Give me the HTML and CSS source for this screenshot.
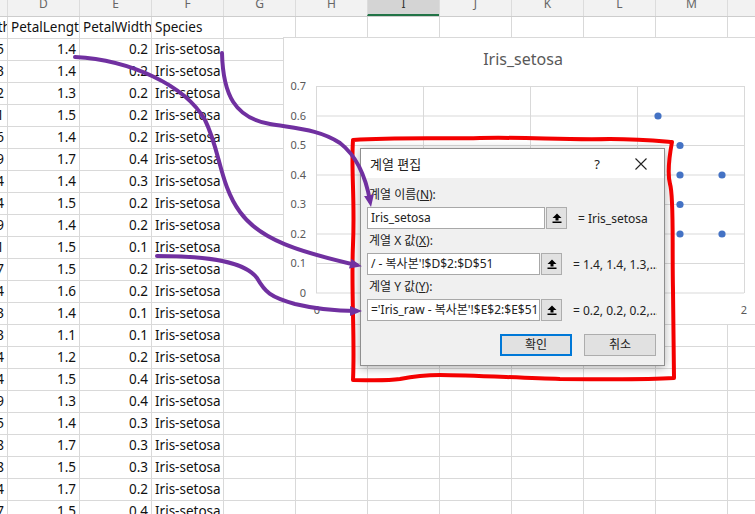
FILE: index.html
```html
<!DOCTYPE html>
<html lang="ko">
<head>
<meta charset="utf-8">
<title>계열 편집</title>
<link rel="stylesheet" href="styles.css">
</head>
<body>
<div class="sheet">
  <div class="colheads">
    <div class="ch">C</div><div class="ch">D</div><div class="ch">E</div><div class="ch">F</div>
    <div class="ch">G</div><div class="ch">H</div><div class="ch sel">I</div><div class="ch">J</div>
    <div class="ch">K</div><div class="ch">L</div><div class="ch">M</div><div class="ch">N</div>
  </div>
  <div class="grid">
    <div class="row"><div class="c">SepalWidth</div><div class="c">PetalLength</div><div class="c">PetalWidth</div><div class="c">Species</div></div>
    <div class="row"><div class="c num">3.5</div><div class="c num">1.4</div><div class="c num">0.2</div><div class="c">Iris-setosa</div></div>
    <div class="row"><div class="c num">3</div><div class="c num">1.4</div><div class="c num">0.2</div><div class="c">Iris-setosa</div></div>
    <div class="row"><div class="c num">3.2</div><div class="c num">1.3</div><div class="c num">0.2</div><div class="c">Iris-setosa</div></div>
    <div class="row"><div class="c num">3.1</div><div class="c num">1.5</div><div class="c num">0.2</div><div class="c">Iris-setosa</div></div>
    <div class="row"><div class="c num">3.6</div><div class="c num">1.4</div><div class="c num">0.2</div><div class="c">Iris-setosa</div></div>
    <div class="row"><div class="c num">3.9</div><div class="c num">1.7</div><div class="c num">0.4</div><div class="c">Iris-setosa</div></div>
    <div class="row"><div class="c num">3.4</div><div class="c num">1.4</div><div class="c num">0.3</div><div class="c">Iris-setosa</div></div>
    <div class="row"><div class="c num">3.4</div><div class="c num">1.5</div><div class="c num">0.2</div><div class="c">Iris-setosa</div></div>
    <div class="row"><div class="c num">2.9</div><div class="c num">1.4</div><div class="c num">0.2</div><div class="c">Iris-setosa</div></div>
    <div class="row"><div class="c num">3.1</div><div class="c num">1.5</div><div class="c num">0.1</div><div class="c">Iris-setosa</div></div>
    <div class="row"><div class="c num">3.7</div><div class="c num">1.5</div><div class="c num">0.2</div><div class="c">Iris-setosa</div></div>
    <div class="row"><div class="c num">3.4</div><div class="c num">1.6</div><div class="c num">0.2</div><div class="c">Iris-setosa</div></div>
    <div class="row"><div class="c num">3</div><div class="c num">1.4</div><div class="c num">0.1</div><div class="c">Iris-setosa</div></div>
    <div class="row"><div class="c num">3</div><div class="c num">1.1</div><div class="c num">0.1</div><div class="c">Iris-setosa</div></div>
    <div class="row"><div class="c num">4</div><div class="c num">1.2</div><div class="c num">0.2</div><div class="c">Iris-setosa</div></div>
    <div class="row"><div class="c num">4.4</div><div class="c num">1.5</div><div class="c num">0.4</div><div class="c">Iris-setosa</div></div>
    <div class="row"><div class="c num">3.9</div><div class="c num">1.3</div><div class="c num">0.4</div><div class="c">Iris-setosa</div></div>
    <div class="row"><div class="c num">3.5</div><div class="c num">1.4</div><div class="c num">0.3</div><div class="c">Iris-setosa</div></div>
    <div class="row"><div class="c num">3.8</div><div class="c num">1.7</div><div class="c num">0.3</div><div class="c">Iris-setosa</div></div>
    <div class="row"><div class="c num">3.8</div><div class="c num">1.5</div><div class="c num">0.3</div><div class="c">Iris-setosa</div></div>
    <div class="row"><div class="c num">3.4</div><div class="c num">1.7</div><div class="c num">0.2</div><div class="c">Iris-setosa</div></div>
    <div class="row"><div class="c num">3.7</div><div class="c num">1.5</div><div class="c num">0.4</div><div class="c">Iris-setosa</div></div>
  </div>
</div>

<div class="chart">
  <div class="chart-title">Iris_setosa</div>
  <svg class="plot" width="478" height="243" viewBox="284 81 478 243">
    <g stroke="#d9d9d9" stroke-width="1">
      <line x1="316" y1="86.5" x2="744" y2="86.5"/>
      <line x1="316" y1="116" x2="744" y2="116"/>
      <line x1="316" y1="145.5" x2="744" y2="145.5"/>
      <line x1="316" y1="175" x2="744" y2="175"/>
      <line x1="316" y1="204.5" x2="744" y2="204.5"/>
      <line x1="316" y1="234" x2="744" y2="234"/>
      <line x1="316" y1="263.5" x2="744" y2="263.5"/>
      <line x1="316" y1="293" x2="744" y2="293"/>
      <line x1="316.5" y1="86" x2="316.5" y2="293"/>
      <line x1="423.5" y1="86" x2="423.5" y2="293"/>
      <line x1="530.5" y1="86" x2="530.5" y2="293"/>
      <line x1="637.5" y1="86" x2="637.5" y2="293"/>
      <line x1="744.5" y1="86" x2="744.5" y2="293"/>
    </g>
    <g class="axis" text-anchor="end">
      <text x="306" y="90">0.7</text>
      <text x="306" y="120">0.6</text>
      <text x="306" y="149">0.5</text>
      <text x="306" y="179">0.4</text>
      <text x="306" y="208">0.3</text>
      <text x="306" y="238">0.2</text>
      <text x="306" y="267">0.1</text>
      <text x="306" y="297">0</text>
    </g>
    <g class="axis" text-anchor="middle">
      <text x="317" y="314">0</text>
      <text x="744" y="314">2</text>
    </g>
    <g fill="#4472c4">
      <circle cx="658" cy="116" r="3.6"/>
      <circle cx="680" cy="145.5" r="3.6"/>
      <circle cx="680" cy="175" r="3.6"/>
      <circle cx="722" cy="175" r="3.6"/>
      <circle cx="680" cy="204.5" r="3.6"/>
      <circle cx="680" cy="234" r="3.6"/>
      <circle cx="722" cy="234" r="3.6"/>
      <circle cx="615" cy="234" r="3.6"/>
      <circle cx="594" cy="234" r="3.6"/>
      <circle cx="637" cy="234" r="3.6"/>
    </g>
  </svg>
</div>

<div class="dialog">
  <div class="titlebar">
    <span class="dlg-title">계열 편집</span>
    <span class="help">?</span>
    <span class="close">
      <svg width="12" height="12" viewBox="0 0 12 12"><path d="M0.5 0.5 L11.5 11.5 M11.5 0.5 L0.5 11.5" stroke="#222" stroke-width="1.1" fill="none"/></svg>
    </span>
  </div>
  <div class="dlg-body">
    <div class="lbl">계열 이름(<u>N</u>):</div>
    <div class="field">
      <div class="input">Iris_setosa</div>
      <div class="refbtn"><svg width="10" height="10" viewBox="0 0 10 10"><path d="M5 0.5 L9.5 5 H6.5 V7.5 H3.5 V5 H0.5 Z" fill="#000"/><rect x="0.5" y="8.5" width="9" height="1.5" fill="#000"/></svg></div>
      <div class="val">= Iris_setosa</div>
    </div>
    <div class="lbl">계열 X 값(<u>X</u>):</div>
    <div class="field">
      <div class="input">/ - 복사본'!$D$2:$D$51</div>
      <div class="refbtn"><svg width="10" height="10" viewBox="0 0 10 10"><path d="M5 0.5 L9.5 5 H6.5 V7.5 H3.5 V5 H0.5 Z" fill="#000"/><rect x="0.5" y="8.5" width="9" height="1.5" fill="#000"/></svg></div>
      <div class="val">= 1.4, 1.4, 1.3,...</div>
    </div>
    <div class="lbl">계열 Y 값(<u>Y</u>):</div>
    <div class="field">
      <div class="input">='Iris_raw - 복사본'!$E$2:$E$51</div>
      <div class="refbtn"><svg width="10" height="10" viewBox="0 0 10 10"><path d="M5 0.5 L9.5 5 H6.5 V7.5 H3.5 V5 H0.5 Z" fill="#000"/><rect x="0.5" y="8.5" width="9" height="1.5" fill="#000"/></svg></div>
      <div class="val">= 0.2, 0.2, 0.2,...</div>
    </div>
    <div class="buttons">
      <div class="btn primary">확인</div>
      <div class="btn">취소</div>
    </div>
  </div>
</div>

<svg class="annot" width="755" height="514" viewBox="0 0 755 514">
  <defs>
    <marker id="ah" viewBox="0 0 12 10" refX="6" refY="5" markerWidth="12" markerHeight="10" markerUnits="userSpaceOnUse" orient="auto">
      <path d="M0 0 L12 5 L0 10 Z" fill="#7030a0"/>
    </marker>
  </defs>
  <path class="redline" d="M353 140 C 400 137, 440 139, 480 138 C 530 137, 560 140, 610 139 C 640 139, 660 141, 672 142 C 669 158, 667 172, 670 184 C 674 196, 672 240, 673 290 L 674 378 C 640 380, 600 379, 560 379 C 520 378, 470 375, 440 375 C 420 375, 410 377, 400 379 C 385 381, 370 380, 353 380 C 355 340, 351 290, 353 245 C 355 200, 351 170, 353 140 Z"/>
  <path class="arrow" d="M75 57 C 130 60, 185 85, 205 120 C 220 150, 220 185, 240 212 C 260 240, 300 252, 356 265" marker-end="url(#ah)"/>
  <path class="arrow" d="M222 53 C 223 95, 235 118, 270 124 C 300 129, 320 130, 340 143 C 358 157, 366 178, 370 201" marker-end="url(#ah)"/>
  <path class="arrow" d="M157 256 C 210 256, 245 262, 257 278 C 265 292, 270 297, 295 304 C 320 310, 340 311, 356 311" marker-end="url(#ah)"/>
</svg>
</body>
</html>
```

FILE: styles.css
```css
* { box-sizing: border-box; }
html, body { margin: 0; padding: 0; }
body {
  width: 755px;
  height: 514px;
  overflow: hidden;
  position: relative;
  background: #fff;
  font-family: "Noto Sans", "Noto Sans CJK KR", sans-serif;
  color: #111;
}

/* spreadsheet */
.sheet { margin-left: -65px; width: 864px; }
.colheads {
  display: flex;
  height: 17px;
  background: #f2f2f2;
  border-bottom: 1px solid #cdcdcd;
  overflow: hidden;
}
.ch {
  flex: none;
  width: 72px;
  border-left: 1px solid #dcdcdc;
  text-align: center;
  font-size: 12px;
  line-height: 8px;
  color: #666;
}
.ch.sel {
  background: #d4d4d4;
  border-bottom: 2px solid #217346;
  color: #333;
}
.grid {
  height: 497px;
  background-image:
    linear-gradient(to right, #d9d9d9 1px, transparent 1px),
    linear-gradient(to bottom, transparent 21px, #d9d9d9 21px);
  background-size: 72px 22px, 72px 22px;
}
.row { display: flex; height: 22px; }
.c {
  flex: none;
  width: 72px;
  height: 21px;
  line-height: 21px;
  font-size: 13.5px;
  padding: 0 3px 0 4px;
  overflow: hidden;
  white-space: nowrap;
}
.num { text-align: right; }

/* chart */
.chart {
  position: absolute;
  left: 283px;
  top: 37px;
  width: 480px;
  height: 288px;
  background: #fff;
  border: 1px solid #d9d9d9;
}
.chart-title {
  height: 43px;
  padding-top: 10px;
  line-height: 22px;
  text-align: center;
  font-size: 16px;
  color: #595959;
}
.plot { display: block; }
.axis { font-family: "Noto Sans", sans-serif; font-size: 11px; fill: #595959; }

/* dialog */
.dialog {
  position: absolute;
  left: 360px;
  top: 148px;
  width: 305px;
  height: 218px;
  background: #f0f0f0;
  border: 1px solid #8f8f8f;
  box-shadow: 0 2px 9px rgba(0, 0, 0, 0.3);
  font-size: 12px;
  color: #222;
}
.titlebar {
  height: 29px;
  background: #fff;
  display: flex;
  align-items: center;
  padding-left: 9px;
  font-size: 13px;
}
.dlg-title { flex: 1; }
.help { width: 30px; text-align: center; font-size: 13px; }
.close {
  width: 46px;
  margin-left: 6px;
  display: flex;
  justify-content: center;
  align-items: center;
}
.close svg { display: block; }
.dlg-body { padding: 7px 7px 0 6px; }
.lbl { height: 20px; line-height: 20px; padding-left: 2px; }
.lbl + .field { margin-top: 2px; }
.field + .lbl { margin-top: 2px; }
.field { display: flex; align-items: center; height: 22px; }
.input {
  width: 178px;
  height: 22px;
  background: #fff;
  border: 1px solid #a8a8a8;
  padding-left: 3px;
  line-height: 20px;
  white-space: nowrap;
  overflow: hidden;
}
.refbtn {
  width: 21px;
  height: 22px;
  margin-left: 1px;
  background: #e1e1e1;
  border: 1px solid #adadad;
  display: flex;
  justify-content: center;
  align-items: center;
}
.refbtn svg { display: block; }
.val { margin-left: 11px; white-space: nowrap; overflow: hidden; }
.buttons {
  display: flex;
  justify-content: flex-end;
  gap: 12px;
  margin-top: 13px;
  padding-right: 1px;
}
.btn {
  width: 72px;
  height: 22px;
  background: #e1e1e1;
  border: 1px solid #adadad;
  text-align: center;
  line-height: 20px;
}
.btn.primary { border: 2px solid #0078d7; line-height: 18px; }

/* annotations */
.annot { position: absolute; left: 0; top: 0; pointer-events: none; }
.redline { fill: none; stroke: #f40000; stroke-width: 4; stroke-linejoin: round; }
.arrow { fill: none; stroke: #7030a0; stroke-width: 4; stroke-linecap: round; }
```
